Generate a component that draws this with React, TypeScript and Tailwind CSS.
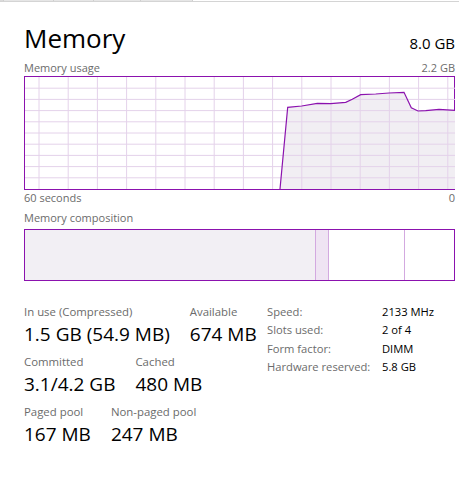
import React from "react";

const FONT = { fontFamily: '"Open Sans", "Noto Sans", sans-serif' };

// usage curve, coordinates inside the chart frame (430 x 112)
const usage: [number, number][] = [
  [255, 112],
  [262.7, 30.3],
  [276.7, 29],
  [292.3, 26.3],
  [305.7, 26.7],
  [320.7, 25.3],
  [327.3, 22.3],
  [335.7, 17.7],
  [350.7, 17],
  [364, 16],
  [379, 15.3],
  [386.3, 30.7],
  [393, 34],
  [400.7, 33.7],
  [414, 32.3],
  [430, 33.3],
];

const UsageChart: React.FC = () => {
  const line = usage.map((p) => p.join(",")).join(" ");
  const area = `${line} 430,112`;
  const vx = Array.from({ length: 15 }, (_, i) => 14 + i * 29.2);
  const hy = Array.from({ length: 9 }, (_, i) => 11.2 * (i + 1));

  return (
    <div className="h-[114px] border border-[#8b12ae]">
      <svg width="430" height="112" viewBox="0 0 430 112" className="block">
        <polygon points={area} fill="#f1eef3" />
        {vx.map((x) => (
          <line key={x} x1={x} x2={x} y1={0} y2={112} stroke="#e4d2ea" strokeWidth="1" />
        ))}
        {hy.map((y) => (
          <line key={y} x1={0} x2={430} y1={y} y2={y} stroke="#e4d2ea" strokeWidth="1" />
        ))}
        <polyline points={line} fill="none" stroke="#8b12ae" strokeWidth="1.2" />
      </svg>
    </div>
  );
};

const Stat: React.FC<{ label: string; value: string }> = ({ label, value }) => (
  <div className="flex flex-col">
    <span className="text-[11.4px] leading-[16px] text-[#6b6b6b]">{label}</span>
    <span className="text-[19px] leading-[26px] text-black mt-[1px]">{value}</span>
  </div>
);

const specs = [
  ["Speed:", "2133 MHz"],
  ["Slots used:", "2 of 4"],
  ["Form factor:", "DIMM"],
  ["Hardware reserved:", "5.8 GB"],
];

export default function App() {
  return (
    <div className="w-[459px] h-[484px] bg-white overflow-hidden" style={FONT}>
      {/* tab remnants */}
      <div className="flex h-px">
        <div className="w-[3px] bg-[#dadada]" />
        <div className="w-[50px] bg-[#e6e6e6] border-l border-[#cfcfcf]" />
        <div className="w-[40px] bg-[#e6e6e6] border-l border-[#cfcfcf]" />
        <div className="w-[47px] bg-[#e6e6e6] border-l border-[#cfcfcf]" />
        <div className="w-[53px] bg-[#e6e6e6] border-l border-r border-[#cfcfcf]" />
      </div>
      <div className="h-px bg-[#d4d4d4]" />

      <div className="pl-[24px] pr-[4px]">
        <div className="flex items-end justify-between mt-[19px] h-[34px]">
          <span className="text-[26px] leading-[34px] text-black">Memory</span>
          <span className="text-[15px] leading-[20px] text-black mb-[2px]">8.0 GB</span>
        </div>

        <div className="flex justify-between text-[11px] leading-[16px] text-[#6b6b6b] mt-[5px]">
          <span>Memory usage</span>
          <span>2.2 GB</span>
        </div>

        <UsageChart />

        <div className="flex justify-between text-[11px] leading-[16px] text-[#6b6b6b]">
          <span>60 seconds</span>
          <span>0</span>
        </div>

        <div className="text-[11px] leading-[16px] text-[#6b6b6b] mt-[4px]">Memory composition</div>

        <div className="flex h-[52px] border border-[#8b12ae] mt-[3px]">
          <div className="w-[290px] bg-[#f2eff4]" />
          <div className="w-[14px] bg-[#efe4f3] border-l border-r border-[#d3a9e0]" />
          <div className="w-[76px] bg-white border-r border-[#d3a9e0]" />
          <div className="flex-1 bg-white" />
        </div>

        <div className="flex items-start mt-[23px]">
          <div className="flex flex-col gap-[7px] w-[243px]">
            <div className="flex gap-[20px]">
              <Stat label="In use (Compressed)" value="1.5 GB (54.9 MB)" />
              <Stat label="Available" value="674 MB" />
            </div>
            <div className="flex gap-[20px]">
              <Stat label="Committed" value="3.1/4.2 GB" />
              <Stat label="Cached" value="480 MB" />
            </div>
            <div className="flex gap-[20px]">
              <Stat label="Paged pool" value="167 MB" />
              <Stat label="Non-paged pool" value="247 MB" />
            </div>
          </div>

          <div className="grid grid-cols-[115px_auto] gap-y-[2px] text-[11.2px] leading-[16.3px]">
            {specs.map(([k, v]) => (
              <React.Fragment key={k}>
                <span className="text-[#6b6b6b]">{k}</span>
                <span className="text-black">{v}</span>
              </React.Fragment>
            ))}
          </div>
        </div>
      </div>
    </div>
  );
}
